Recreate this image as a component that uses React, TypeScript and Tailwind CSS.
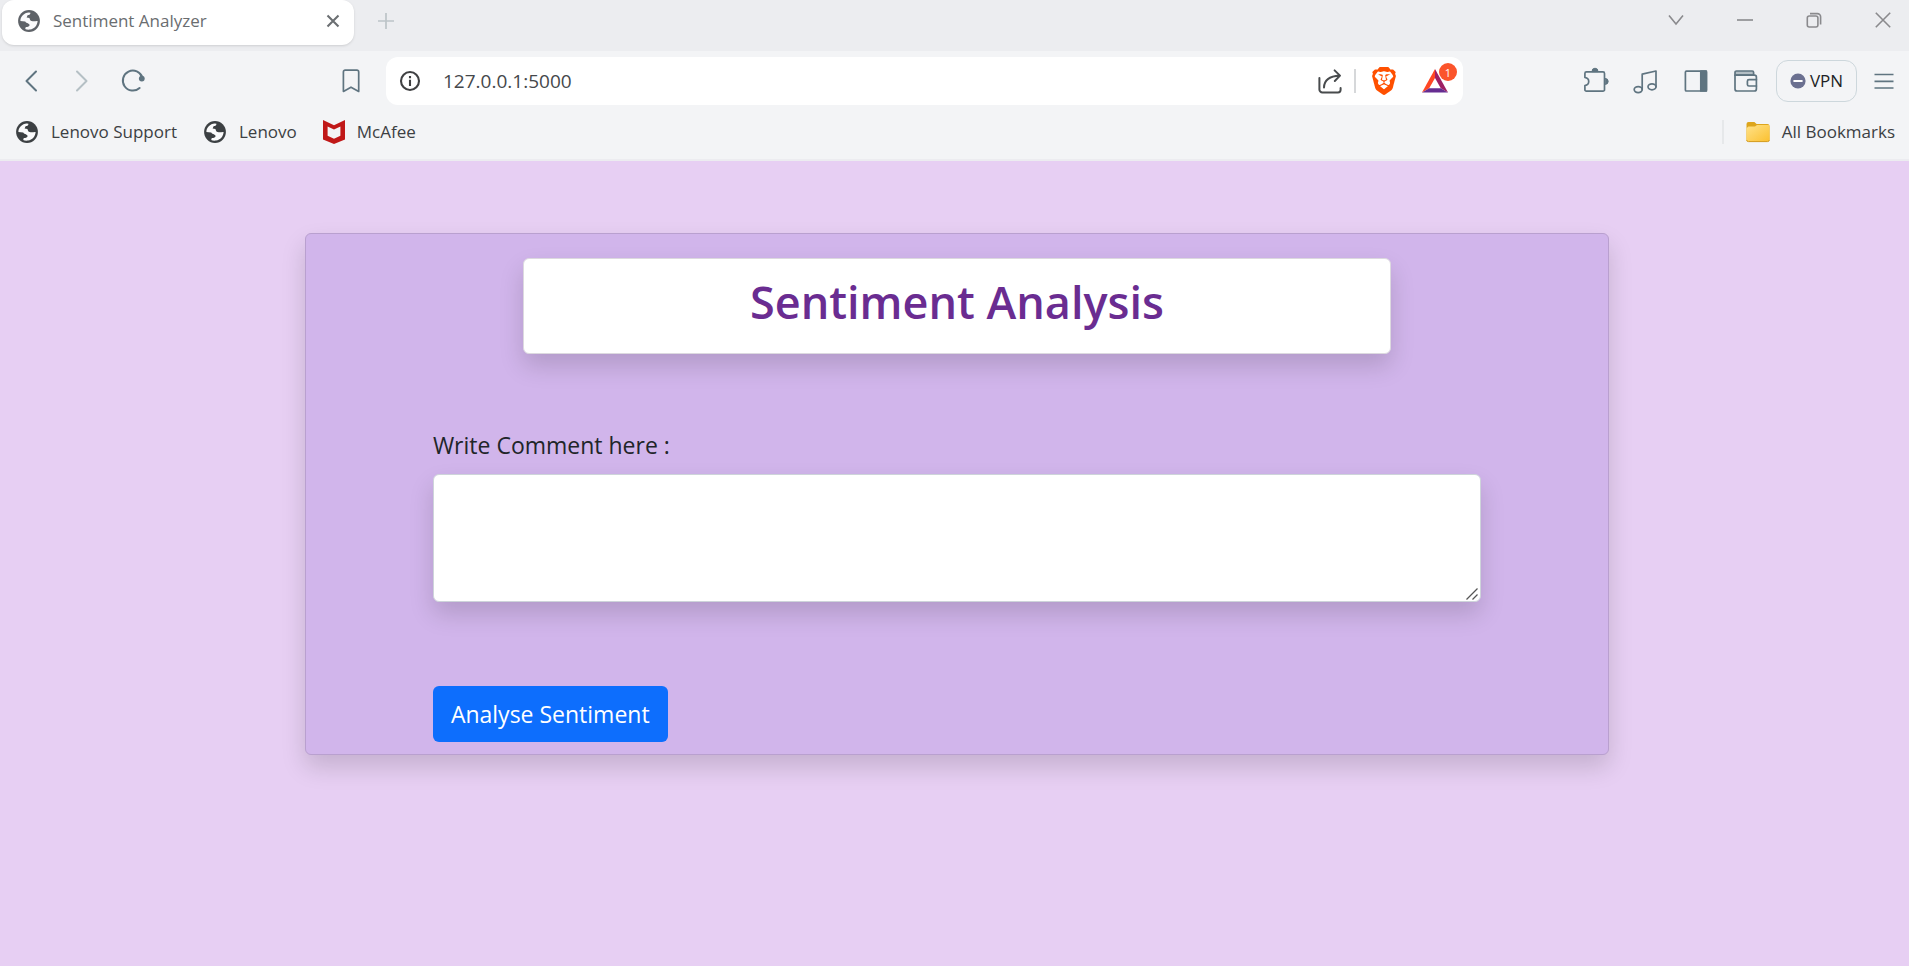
import type { ReactNode } from "react";
import { SiBrave } from "react-icons/si";

function GlobeIcon({ className }: { className: string }) {
  return (
    <svg viewBox="0 0 24 24" className={`size-6 shrink-0 ${className}`} aria-hidden="true">
      <circle cx="12" cy="12" r="10.9" fill="currentColor" />
      <path
        fill="#fbfbfc"
        d="M3.4 11.9C3.4 7.5 7 3.8 11.8 3.5L13.4 3.7C13.6 5.5 12.4 5.9 11 6.1C10 6.5 10.3 7.8 9.6 8.6L12.4 8.9C13 10.4 13.2 11.6 14.6 12.1C17 12.7 18 12 20.6 12.1C20.4 16.4 17.4 20 13 20.6C10.8 20.9 9.2 20.5 8.2 20L8.8 18C11 18 12.4 17.5 12.6 16C12.4 14.4 9.6 14.6 8.2 12.6Z"
      />
    </svg>
  );
}

function LineIcon({ children, className = "" }: { children: ReactNode; className?: string }) {
  return (
    <svg
      viewBox="0 0 28 28"
      className={`size-7 shrink-0 ${className}`}
      fill="none"
      stroke="currentColor"
      strokeWidth="1.7"
      strokeLinecap="round"
      strokeLinejoin="round"
      aria-hidden="true"
    >
      {children}
    </svg>
  );
}

function ToolButton({ label, className = "", children }: { label: string; className?: string; children: ReactNode }) {
  return (
    <button
      type="button"
      aria-label={label}
      className={`flex h-11 w-[51px] shrink-0 items-center justify-center ${className}`}
    >
      {children}
    </button>
  );
}

function WindowButton({ label, children }: { label: string; children: ReactNode }) {
  return (
    <button type="button" aria-label={label} className="flex h-10 w-[69px] items-center justify-center text-[#8a8a8d]">
      <svg viewBox="0 0 16 16" className="size-4" fill="none" stroke="currentColor" strokeWidth="1.6" aria-hidden="true">
        {children}
      </svg>
    </button>
  );
}

function TabStrip() {
  return (
    <div className="flex h-[51px] items-start bg-[#ecedf0] pl-[2px]">
      <div className="flex h-[45px] w-[352px] items-center rounded-xl bg-white pr-[11px] pb-[3px] pl-[15px] shadow-sm">
        <GlobeIcon className="text-[#5f6368]" />
        <span className="ml-3 flex-1 text-[17px] leading-6 text-[#6a6d70]">Sentiment Analyzer</span>
        <button type="button" aria-label="Close tab" className="flex size-5 items-center justify-center text-[#6b6f72]">
          <svg viewBox="0 0 16 16" className="size-4" stroke="currentColor" strokeWidth="2.1" aria-hidden="true">
            <path d="M2.5 2.5 13.5 13.5M13.5 2.5 2.5 13.5" />
          </svg>
        </button>
      </div>
      <button type="button" aria-label="New tab" className="ml-[22px] flex h-[42px] w-5 items-center justify-center text-[#bcc3c7]">
        <svg viewBox="0 0 16 16" className="size-4" stroke="currentColor" strokeWidth="1.7" aria-hidden="true">
          <path d="M8 0V16M0 8H16" />
        </svg>
      </button>
      <div className="ml-auto flex">
        <WindowButton label="Search tabs">
          <path d="M1 3.5 8 12 15 3.5" />
        </WindowButton>
        <WindowButton label="Minimize">
          <path d="M0 8H16" />
        </WindowButton>
        <WindowButton label="Restore">
          <rect x="1.3" y="4" width="10.6" height="11" rx="2" />
          <path d="M4 1.6H11.4a3.2 3.2 0 0 1 3.2 3.2V12.6" />
        </WindowButton>
        <button type="button" aria-label="Close window" className="mr-[18px] ml-[27px] flex h-10 w-4 items-center justify-center text-[#8a8a8d]">
          <svg viewBox="0 0 16 16" className="size-4" fill="none" stroke="currentColor" strokeWidth="1.6" aria-hidden="true">
            <path d="M.8.8 15.2 15.2M15.2.8.8 15.2" />
          </svg>
        </button>
      </div>
    </div>
  );
}

function AddressBar() {
  return (
    <div className="flex h-12 min-w-0 flex-1 items-center rounded-xl bg-white pr-[14px] pl-3">
      <svg viewBox="0 0 24 24" className="size-6 shrink-0 text-[#3f4042]" fill="none" stroke="currentColor" strokeWidth="2.1" aria-hidden="true">
        <circle cx="12" cy="12" r="9" />
        <path d="M12 10.8V17M12 7V9.2" />
      </svg>
      <input
        type="text"
        aria-label="Address"
        defaultValue="127.0.0.1:5000"
        className="ml-[21px] min-w-0 flex-1 bg-transparent text-[19px] leading-7 text-[#45484b] outline-none"
      />
      <button type="button" aria-label="Share" className="text-[#484b4d]">
        <LineIcon>
          <path d="M3.4 11V22.4a3 3 0 0 0 3 3H22a2.6 2.6 0 0 0 2.6-2.6V21" strokeWidth="2" />
          <path d="M8 20.5C8.2 13.5 12.5 9.4 23.6 8.6M18.6 3.4 24 8.6 18.8 14" strokeWidth="2" />
        </LineIcon>
      </button>
      <span className="ml-[10px] h-6 w-[2px] bg-[#d6d8da]" />
      <button type="button" aria-label="Brave Shields" className="ml-[14px] flex size-7 items-center justify-center">
        <SiBrave className="size-7 text-[#ff5000]" />
      </button>
      <button type="button" aria-label="Brave Rewards, 1 notification" className="relative ml-[23px] size-7">
        <svg viewBox="0 0 28 28" className="size-7" aria-hidden="true">
          <path d="M14 2 1 25.5 8.2 21.3 14 11Z" fill="#ff4724" />
          <path d="M14 2 27 25.5 19.8 21.3 14 11Z" fill="#9e1f63" />
          <path d="M1 25.5H27L19.8 21.3H8.2Z" fill="#662d91" />
        </svg>
        <span className="absolute -top-1 left-[18px] flex size-[18px] items-center justify-center rounded-full bg-[#fb542b] text-[11px] leading-none text-white">
          1
        </span>
      </button>
    </div>
  );
}

function Toolbar() {
  return (
    <div className="flex h-[60px] items-center pl-[5px] text-[#5f7480]">
      <ToolButton label="Back">
        <LineIcon>
          <path d="M19 4.5 9.5 14 19 23.5" strokeWidth="2" />
        </LineIcon>
      </ToolButton>
      <ToolButton label="Forward" className="text-[#b5c0c5]">
        <LineIcon>
          <path d="M9 4.5 18.5 14 9 23.5" strokeWidth="2" />
        </LineIcon>
      </ToolButton>
      <ToolButton label="Reload">
        <LineIcon>
          <path d="M23.4 10.6A10 10 0 1 0 20.6 21" strokeWidth="2" />
          <circle cx="22.8" cy="11.6" r="2.9" fill="currentColor" stroke="none" />
        </LineIcon>
      </ToolButton>
      <ToolButton label="Bookmark this page" className="ml-[167px]">
        <LineIcon>
          <path d="M8.2 3.2H20a1.7 1.7 0 0 1 1.7 1.7V24.4L14 20.2 6.4 24.4V4.9A1.7 1.7 0 0 1 8.2 3.2Z" />
        </LineIcon>
      </ToolButton>
      <div className="mr-[108px] ml-[10px] flex min-w-0 flex-1">
        <AddressBar />
      </div>
      <div className="grid w-[200px] shrink-0 grid-cols-4 justify-items-center">
        <ToolButton label="Extensions">
          <LineIcon>
            <path d="M4.4 4.9H21a1.5 1.5 0 0 1 1.5 1.5V22.7a1.5 1.5 0 0 1-1.5 1.5H4.4a1.5 1.5 0 0 1-1.5-1.5V18.6C8 17.4 8 11.4 2.9 10.4V6.4A1.5 1.5 0 0 1 4.4 4.9Z" />
            <path d="M10 4.2a3 3 0 0 1 6 0ZM23.2 11.4a3 3 0 0 1 0 6Z" fill="currentColor" strokeWidth="1" />
          </LineIcon>
        </ToolButton>
        <ToolButton label="Music">
          <LineIcon>
            <ellipse cx="6.2" cy="22.6" rx="4" ry="3" />
            <ellipse cx="20" cy="19.8" rx="4" ry="3" />
            <path d="M10.2 22.6V7.2L24 4V19.8" />
          </LineIcon>
        </ToolButton>
        <ToolButton label="Sidebar">
          <LineIcon>
            <rect x="3.4" y="4.2" width="21" height="19.8" rx="1" />
            <path d="M18.8 4.2H24.4V24H18.8Z" fill="currentColor" />
          </LineIcon>
        </ToolButton>
        <ToolButton label="Wallet">
          <LineIcon>
            <path d="M3 8.2V5.4a1.4 1.4 0 0 1 1.4-1.4H20.2a1.4 1.4 0 0 1 1.4 1.4V8.2Z" fill="#b3bec4" />
            <path d="M3 8.2H22.4A2 2 0 0 1 24.4 10.2V22a2 2 0 0 1-2 2H5a2 2 0 0 1-2-2Z" />
            <path d="M24.4 12.6H17A1.6 1.6 0 0 0 15.4 14.2V17.4A1.6 1.6 0 0 0 17 19H24.4" />
          </LineIcon>
        </ToolButton>
      </div>
      <button
        type="button"
        className="mr-px ml-[5px] flex h-[42px] w-[81px] shrink-0 items-center justify-center gap-1 rounded-xl border-[1px] border-[#cdd7dc] text-[17px] leading-6 text-[#1d1f25]"
      >
        <svg viewBox="0 0 16 16" className="size-4" aria-hidden="true">
          <circle cx="8" cy="8" r="7.6" fill="#6b7090" />
          <path d="M4.2 8H11.8" stroke="#fff" strokeWidth="2" strokeLinecap="round" />
        </svg>
        VPN
      </button>
      <ToolButton label="Menu">
        <LineIcon>
          <path d="M4.5 7.5H23.5M4.5 14.3H23.5M4.5 21H23.5" strokeLinecap="butt" />
        </LineIcon>
      </ToolButton>
    </div>
  );
}

function BookmarksBar() {
  return (
    <nav aria-label="Bookmarks" className="flex h-[42px] items-center pr-[14px] pl-[15px] text-[17px] leading-6 text-[#3c4043]">
      <a href="#lenovo-support" className="flex items-center gap-3">
        <GlobeIcon className="text-[#3c4043]" />
        Lenovo Support
      </a>
      <a href="#lenovo" className="ml-[26px] flex items-center gap-3">
        <GlobeIcon className="text-[#3c4043]" />
        Lenovo
      </a>
      <a href="#mcafee" className="ml-[26px] flex items-center gap-3">
        <svg viewBox="0 0 22 24" className="h-6 w-[22px]" aria-hidden="true">
          <path fill="#c01818" fillRule="evenodd" d="M0 0 11 5.2 22 0V19.4L11 24 0 19.4ZM4.6 6.4V15.8L11 18.8 17.4 15.8V6.4L11 9.4Z" />
        </svg>
        McAfee
      </a>
      <a href="#all-bookmarks" className="ml-auto flex items-center gap-3">
        <span className="mr-[10px] h-6 w-[2px] bg-[#e6e8ea]" />
        <svg viewBox="0 0 24 24" className="size-6" aria-hidden="true">
          <defs>
            <linearGradient id="folder" x1="0" y1="0" x2="1" y2="1">
              <stop offset="0" stopColor="#ffe28a" />
              <stop offset="1" stopColor="#fbc02f" />
            </linearGradient>
          </defs>
          <path d="M.5 4A2 2 0 0 1 2.5 2H8.4L10.6 4H21.5a2 2 0 0 1 2 2V20H.5Z" fill="#dda51c" />
          <path d="M.5 8.2 2.4 6.4H9L11 5H22.2a1.3 1.3 0 0 1 1.3 1.3V19.6a2 2 0 0 1-2 2H2.5a2 2 0 0 1-2-2Z" fill="url(#folder)" />
          <path d="M.6 20A1.8 1.8 0 0 0 2.5 21.6H21.5A1.8 1.8 0 0 0 23.4 20" fill="none" stroke="#d39a1a" strokeWidth="1" />
        </svg>
        <span>All Bookmarks</span>
      </a>
    </nav>
  );
}

function SentimentForm() {
  return (
    <div className="w-[68.5%] rounded-md border border-[#b9a0cf] bg-[#d1b5eb] pt-6 pb-3 shadow-[0_12px_24px_rgba(0,0,0,0.15)]">
      <div className="mx-auto flex h-24 w-2/3 justify-center rounded-md border border-[#dcd9df] bg-white pt-[14px] shadow-[0_12px_24px_rgba(0,0,0,0.15)]">
        <h1 className="text-[45px] leading-[58px] font-semibold text-[#6a2c91]">Sentiment Analysis</h1>
      </div>
      <form className="mx-[127px] mt-[73px] flex flex-col items-start" onSubmit={(event) => event.preventDefault()}>
        <label htmlFor="comment" className="mb-[11px] text-[23px] leading-9 text-[#212529]">
          Write Comment here :
        </label>
        <div className="relative w-full">
          <textarea
            id="comment"
            name="comment"
            className="block h-32 w-full resize-none rounded-md border border-[#ced4da] bg-white px-[18px] py-[9px] text-[23px] leading-9 text-[#212529] shadow-[0_12px_24px_rgba(0,0,0,0.15)]"
          />
          <svg
            viewBox="0 0 12 12"
            className="pointer-events-none absolute right-[3px] bottom-[2px] size-3"
            stroke="#555"
            strokeWidth="1.3"
            aria-hidden="true"
          >
            <path d="M.5 11.5 11.5.5M6.5 11.5 11.5 6.5" />
          </svg>
        </div>
        <button type="submit" className="mt-[84px] h-14 rounded-md bg-[#0d6efd] px-[18px] text-[23px] leading-9 text-white">
          Analyse Sentiment
        </button>
      </form>
    </div>
  );
}

export default function App() {
  return (
    <div className="flex min-h-screen flex-col bg-[#e7cff3] font-['Open_Sans','Noto_Sans',sans-serif]">
      <header className="border-b-2 border-[#ececf0] bg-[#f3f4f6] pb-[6px]">
        <TabStrip />
        <Toolbar />
        <BookmarksBar />
      </header>
      <main className="flex flex-1 items-start justify-center pt-[72px] pl-[5px]">
        <SentimentForm />
      </main>
    </div>
  );
}
